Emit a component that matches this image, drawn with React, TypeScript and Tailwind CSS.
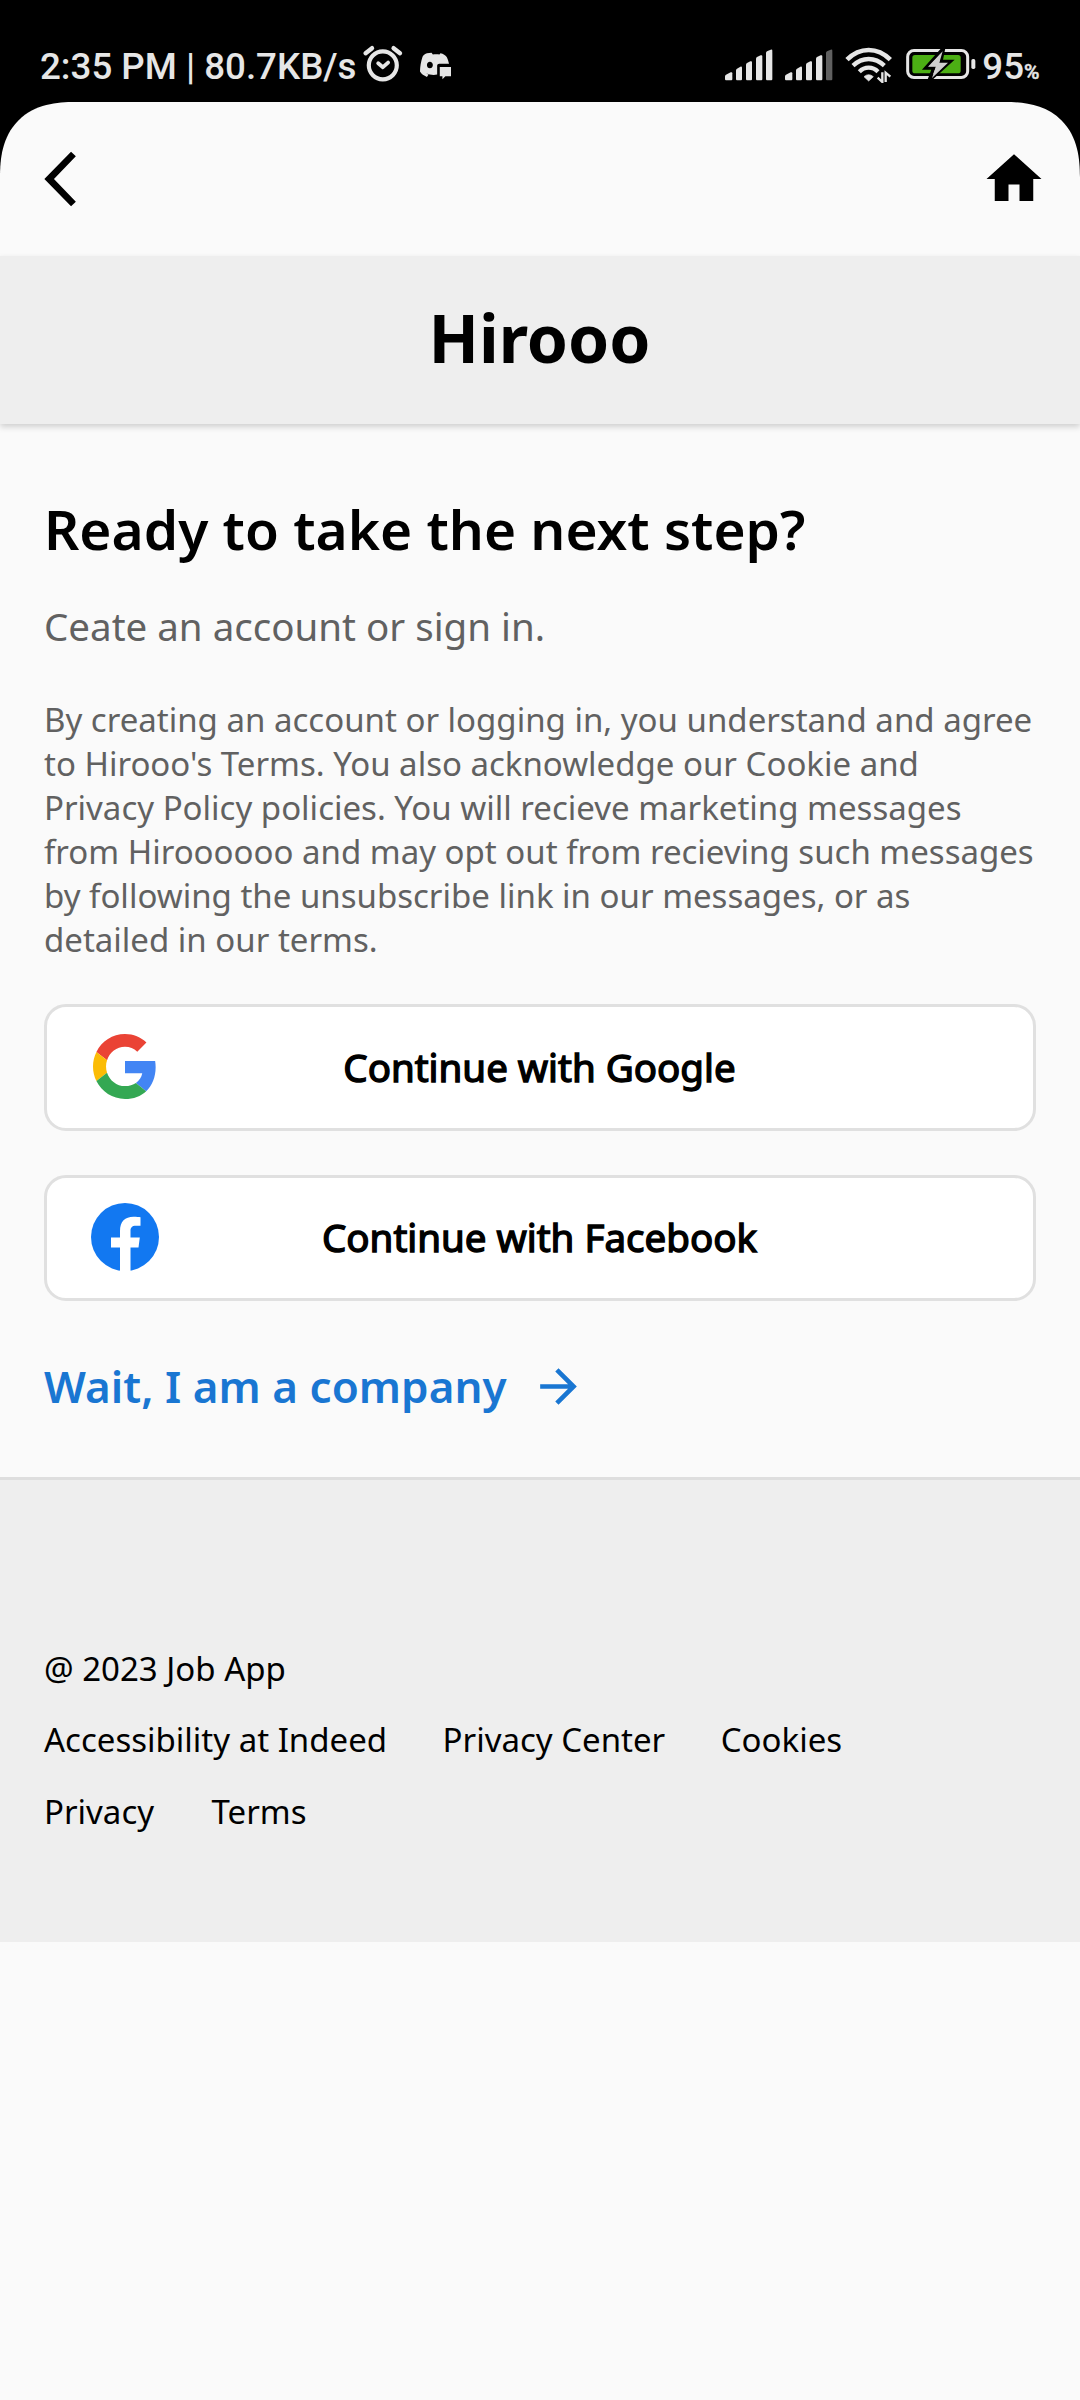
import type { ReactNode } from "react";

function AlarmIcon() {
  return (
    <svg className="h-[40px] w-[42px] shrink-0" viewBox="0 0 42 40" fill="none" stroke="#e6e6e6" strokeLinecap="round">
      <circle cx="20.8" cy="21.3" r="14" strokeWidth="4.2" />
      <path d="M3.6 9.2 10 4.2M31.6 4.2 38 9.2" strokeWidth="4.4" />
      <path d="m16.2 19.2 4.7 4 5.2-4.6" strokeWidth="3.8" strokeLinejoin="round" />
    </svg>
  );
}

function DiscordChatIcon() {
  return (
    <svg className="h-[28px] w-[31px] shrink-0" viewBox="195 52 94 84">
      <path
        fill="#e6e6e6"
        fillRule="evenodd"
        d="M216 55c-8 3-12 6-14 13-4 12-7 28-7 43 4 7 12 13 21 16l5-7c-3-1-5-2-7-4 10 5 22 6 33 4V93c0-3 3-6 6-6h30c-2-8-4-14-7-20-4-6-10-10-19-12l-3 4c-6-1-14-1-20 0l-4-5zM225 81c-5 0-9 4-9 10s4 10 9 10 9-4 9-10-4-10-9-10z"
      />
      <path fill="#e6e6e6" d="M255 97h34v28h-17l-9 9v-9h-8z" />
    </svg>
  );
}

function SignalIcon({ last }: { last: string }) {
  return (
    <svg className="h-[32px] w-[48px] shrink-0" viewBox="73 86 144 96" fill="#e6e6e6">
      <path d="M73 176v-8q0-3 3-5l14-7q5-2 5 3v18q0 3-3 3H76q-3 0-3-4z" />
      <path d="M106 176v-26q0-3 3-5l10-6q5-2 5 3v35q0 3-3 3h-12q-3 0-3-4z" />
      <path d="M136 176v-43q0-3 3-5l10-5q5-2 5 3v51q0 3-3 3h-12q-3 0-3-4z" />
      <path d="M166 176v-61q0-3 3-5l11-5q5-2 5 3v69q0 3-3 3h-13q-3 0-3-4z" />
      <path fill={last} d="M196 176V98q0-3 3-5l11-5q5-2 5 3v86q0 3-3 3h-13q-3 0-3-4z" />
    </svg>
  );
}

function WifiIcon() {
  return (
    <svg className="h-[36px] w-[47px] shrink-0" viewBox="433 81 141 108" fill="none" stroke="#e6e6e6">
      <path d="M439 119Q468 90 504 90t65 29" strokeWidth="14" />
      <path d="M457 137q21-20 47-20t47 20" strokeWidth="13" />
      <path d="M476 155q12-12 28-12t28 12" strokeWidth="13" />
      <path d="M490 170q14-12 28 0l-14 13z" fill="#e6e6e6" strokeWidth="2" />
      <path d="M531 173l14 13v-29M569 170l-14-12v28" strokeWidth="7" />
    </svg>
  );
}

function BatteryIcon() {
  return (
    <svg className="h-[34px] w-[70px] shrink-0" viewBox="617 81 210 102">
      <rect x="622" y="91.5" width="180" height="81" rx="19" fill="none" stroke="#e6e6e6" strokeWidth="9" />
      <rect x="636" y="105" width="145" height="55" rx="8" fill="#4caf14" />
      <rect x="813" y="117" width="12" height="30" rx="5" fill="#e6e6e6" />
      <path d="M730 84l-54 60h24l-14 38 64-58h-28z" fill="#cfcfcf" stroke="#000" strokeWidth="10" />
      <path d="M727 94l-44 46h24l-12 34 48-46h-26z" fill="#cfcfcf" />
    </svg>
  );
}

function BackIcon() {
  return (
    <svg className="size-[66px]" viewBox="0 0 24 24">
      <path d="M17.4 3.77 15.65 2.1 5.95 12l9.7 9.9 1.75-1.67L9.44 12z" />
    </svg>
  );
}

function HomeIcon() {
  return (
    <svg className="size-[66px]" viewBox="0 0 24 24">
      <path d="M10 20v-6h4v6h5v-8h3L12 3 2 12h3v8z" />
    </svg>
  );
}

function ArrowIcon() {
  return (
    <svg className="size-[55px]" viewBox="0 0 24 24" fill="currentColor">
      <path d="m12 4-1.41 1.41L16.17 11H4v2h12.17l-5.58 5.59L12 20l8-8z" />
    </svg>
  );
}

function GoogleIcon() {
  return (
    <svg className="h-[65px] w-[64px]" viewBox="0 0 48 48" preserveAspectRatio="none">
      <path fill="#EA4335" d="M24 9.5c3.54 0 6.71 1.22 9.21 3.6l6.85-6.85C35.9 2.38 30.47 0 24 0 14.62 0 6.51 5.38 2.56 13.22l7.98 6.19C12.43 13.72 17.74 9.5 24 9.5z" />
      <path fill="#4285F4" d="M46.98 24.55c0-1.57-.15-3.09-.38-4.55H24v9.02h12.94c-.58 2.96-2.26 5.48-4.78 7.18l7.73 6c4.51-4.18 7.09-10.36 7.09-17.65z" />
      <path fill="#FBBC05" d="M10.53 28.59c-.48-1.45-.76-2.99-.76-4.59s.27-3.14.76-4.59l-7.98-6.19C.92 16.46 0 20.12 0 24c0 3.88.92 7.54 2.56 10.78l7.97-6.19z" />
      <path fill="#34A853" d="M24 48c6.48 0 11.93-2.13 15.89-5.81l-7.73-6c-2.15 1.45-4.92 2.3-8.16 2.3-6.26 0-11.57-4.22-13.47-9.91l-7.98 6.19C6.51 42.62 14.62 48 24 48z" />
    </svg>
  );
}

function FacebookIcon() {
  return (
    <svg className="size-[68px]" viewBox="0 0 68 68">
      <circle cx="34" cy="34" r="34" fill="#1278f1" />
      <path fill="#fff" d="M29 69V44.5h-9v-10h9V28C29 18.500 34 13.700 42.500 13.700c3 0 5.500.2 7 .5v8.600H45c-4.200 0-5.500 2-5.500 5.200v6.500h9.300L47.500 44.500h-8V69z" />
    </svg>
  );
}

function SocialButton({ icon, label }: { icon: ReactNode; label: string }) {
  return (
    <button className="relative flex h-[126.5px] w-full items-center justify-center rounded-[22px] border-[3px] border-[#e0e0e0] bg-white pr-[1px] pb-[1px] text-[38.5px] leading-[52px] [-webkit-text-stroke:1.4px_#000]">
      <span className="absolute left-[35px] flex w-[86px] items-center justify-center">{icon}</span>
      {label}
    </button>
  );
}

export default function App() {
  return (
    <div className="h-[2400px] w-[1080px] overflow-hidden bg-black font-['Noto_Sans',sans-serif] text-black">
      <header className="flex h-[102px] items-start pl-[40px] text-[#e6e6e6]">
        <span className="mt-[45px] font-['Roboto',sans-serif] text-[36.7px] leading-[44px] font-medium whitespace-nowrap">
          2:35 PM | 80.7KB/s
        </span>
        <div className="mt-[44px] ml-[6px]"><AlarmIcon /></div>
        <div className="mt-[52px] ml-[16px]"><DiscordChatIcon /></div>
        <div className="mt-[49px] mr-[40px] ml-auto flex items-start">
          <SignalIcon last="#e6e6e6" />
          <div className="ml-[12px]"><SignalIcon last="#606060" /></div>
          <div className="-mt-[2px] ml-[12px]"><WifiIcon /></div>
          <div className="-mt-[2px] ml-[14px]"><BatteryIcon /></div>
          <div className="-mt-[4px] ml-[6px] flex items-baseline font-['Roboto',sans-serif] leading-[44px] font-medium">
            <span className="text-[36.7px]">95</span>
            <span className="w-[16px] text-[21px] tracking-tight [-webkit-text-stroke:0.5px_#e6e6e6]">%</span>
          </div>
        </div>
      </header>

      <main className="h-[2298px] overflow-hidden rounded-t-[75px] bg-[#fafafa] [corner-shape:superellipse(1.3)]">
        <nav className="flex h-[154px] items-center justify-between pr-[33px] pl-[28px]">
          <BackIcon />
          <HomeIcon />
        </nav>

        <h1 className="h-[168px] bg-[#eeeeee] pr-[1px] text-center text-[66px] leading-[163px] font-bold shadow-[0_3px_6px_rgba(0,0,0,0.17)]">
          Hirooo
        </h1>

        <section className="flex h-[1056px] flex-col border-b-[3px] border-[#dedede] px-[44px] pt-[67px]">
          <h2 className="text-[55px] leading-[75px] font-semibold">Ready to take the next step?</h2>
          <p className="mt-[34px] text-[38.5px] leading-[52px] text-[#616161]">Ceate an account or sign in.</p>
          <p className="mt-[46px] text-[33px] leading-[44px] text-[#616161]">
            By creating an account or logging in, you understand and agree to Hirooo's Terms. You also acknowledge our
            Cookie and Privacy Policy policies. You will recieve marketing messages from Hiroooooo and may opt out from
            recieving such messages by following the unsubscribe link in our messages, or as detailed in our terms.
          </p>
          <div className="mt-[42px] flex flex-col gap-[44px]">
            <SocialButton icon={<GoogleIcon />} label="Continue with Google" />
            <SocialButton icon={<FacebookIcon />} label="Continue with Facebook" />
          </div>
          <a className="mt-[55px] flex items-center text-[44px] leading-[60px] font-semibold tracking-[0.03px] text-[#1976d2]">
            Wait, I am a company
            <span className="ml-[24.5px]"><ArrowIcon /></span>
          </a>
        </section>

        <footer className="flex h-[462px] flex-col bg-[#eeeeee] px-[44px] pt-[167px] text-[33px] leading-[44px]">
          <p>@ 2023 Job App</p>
          <div className="mt-[27px] flex gap-[55.5px]">
            <span>Accessibility at Indeed</span>
            <span>Privacy Center</span>
            <span>Cookies</span>
          </div>
          <div className="mt-[28px] flex gap-[57.5px]">
            <span>Privacy</span>
            <span>Terms</span>
          </div>
        </footer>
      </main>
    </div>
  );
}
